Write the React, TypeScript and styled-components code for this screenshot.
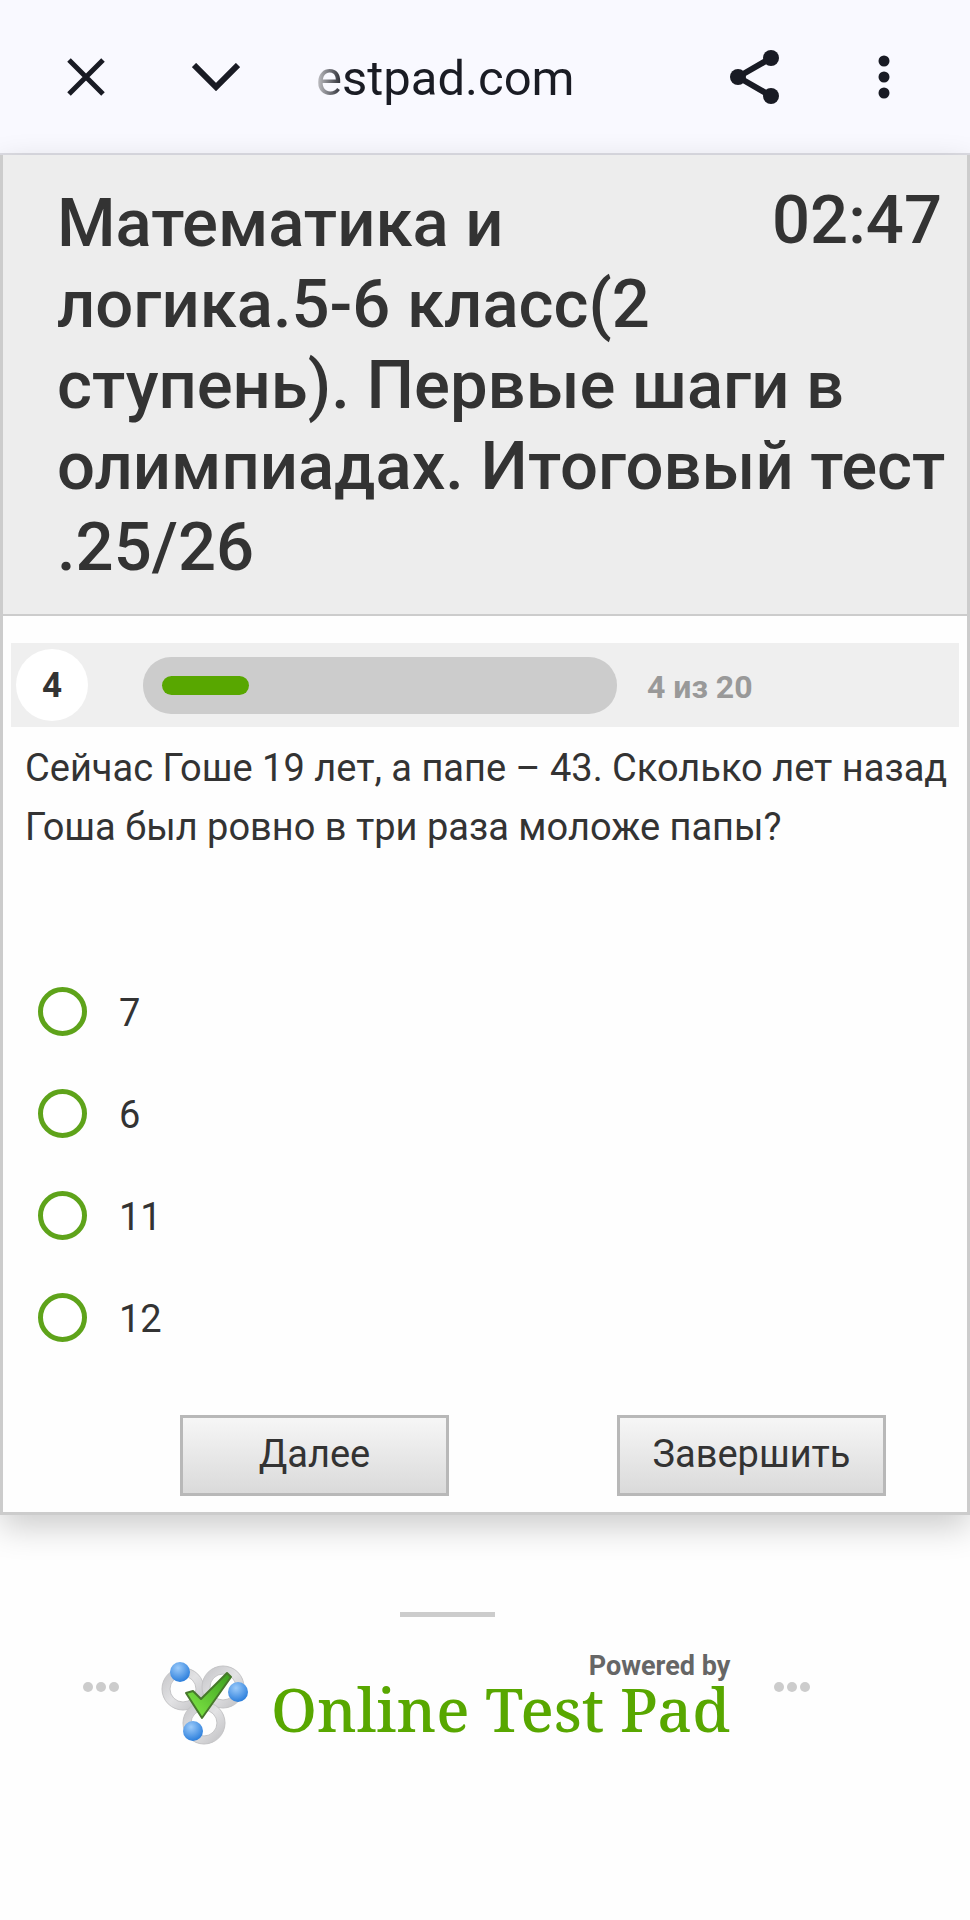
import React, { useState } from "react";
import styled, { createGlobalStyle } from "styled-components";

const GlobalStyle = createGlobalStyle`
  * { box-sizing: border-box; }
  body {
    margin: 0;
    background: #fefefe;
    color: #333;
    font-family: Roboto, "Liberation Sans", sans-serif;
  }
`;

const BrowserBar = styled.header`
  display: flex;
  align-items: center;
  height: 155px;
  padding: 0 56px;
  background: #f9f9ff;
  border-bottom: 2px solid #dddde4;
`;

const IconButton = styled.button<{ $gap?: number }>`
  display: flex;
  align-items: center;
  justify-content: center;
  width: 60px;
  height: 60px;
  padding: 0;
  margin-left: ${(p) => p.$gap ?? 0}px;
  border: 0;
  background: none;
  color: #191b24;
`;

const Address = styled.div`
  flex: 1;
  margin-left: 70px;
  padding-top: 4px;
  font-size: 49px;
  line-height: 60px;
  color: transparent;
  background: linear-gradient(90deg, #c8c8cc 0, #1a1c24 28px);
  background-clip: text;
`;

const Card = styled.main`
  border: 3px solid #ccc;
  border-top: 0;
  background: #fefefe;
  box-shadow: 0 12px 32px rgba(0, 0, 0, 0.2);
`;

const TestHeader = styled.div`
  padding: 28px 12px 26px 54px;
  background: #ededed;
  border-bottom: 2px solid #ccc;
`;

const Timer = styled.time`
  float: right;
  margin: 0 13px 0 64px;
  font-size: 67px;
  line-height: 74px;
  font-weight: 500;
`;

const Title = styled.h1`
  margin: 0;
  font-size: 67px;
  line-height: 81px;
  font-weight: 500;
`;

const ProgressRow = styled.div`
  display: flex;
  align-items: center;
  height: 84px;
  margin: 27px 8px 0;
  background: #efefef;
`;

const QuestionNumber = styled.span`
  display: flex;
  align-items: center;
  justify-content: center;
  width: 72px;
  height: 72px;
  margin-left: 5px;
  border-radius: 50%;
  background: #fff;
  font-size: 35px;
  font-weight: 700;
`;

const Track = styled.div`
  width: 50%;
  height: 57px;
  margin-left: 55px;
  padding: 19px;
  border-radius: 28px;
  background: #ccc;
`;

const Fill = styled.div`
  height: 19px;
  border-radius: 10px;
  background: #58a700;
`;

const ProgressText = styled.span`
  margin-left: 30px;
  padding-top: 4px;
  font-size: 32px;
  font-weight: 700;
  color: #999;
`;

const Question = styled.p`
  margin: 12px 16px 0 22px;
  font-size: 38px;
  line-height: 59px;
`;

const Answers = styled.fieldset`
  display: grid;
  gap: 42px;
  margin: 124px 0 0;
  padding: 0 35px;
  border: 0;
`;

const Answer = styled.label`
  display: flex;
  align-items: center;
  gap: 32px;
  height: 60px;
  font-size: 38px;
`;

const AnswerText = styled.span`
  padding-top: 4px;
`;

const Radio = styled.input`
  appearance: none;
  width: 49px;
  height: 49px;
  margin: 0;
  border: 5px solid #5ea31a;
  border-radius: 50%;
  background: #fff;
  &:checked { box-shadow: inset 0 0 0 10px #fff; background: #5ea31a; }
`;

const Actions = styled.div`
  display: flex;
  justify-content: space-between;
  padding: 68px 81px 16px 177px;
`;

const ActionButton = styled.button`
  width: 269px;
  height: 81px;
  padding: 0 0 4px;
  border: 3px solid #b8b8b8;
  background: linear-gradient(#f6f6f6, #dadada);
  color: #333;
  font-family: inherit;
  font-size: 38px;
`;

const Footer = styled.footer`
  display: flex;
  flex-direction: column;
  align-items: flex-start;
`;

const Divider = styled.hr`
  width: 95px;
  height: 5px;
  margin: 97px 0 0 400px;
  border: 0;
  background: #ccc;
`;

const BrandRow = styled.div`
  display: flex;
  align-items: center;
  margin: 33px 0 0 83px;
`;

const Brand = styled.a`
  display: flex;
  align-items: flex-start;
  margin: 0 44px 0 42px;
  color: #58a700;
  text-decoration: none;
`;

const BrandText = styled.span`
  display: flex;
  flex-direction: column;
  align-items: flex-end;
  margin-left: 20px;
`;

const Powered = styled.small`
  font-size: 27px;
  line-height: 32px;
  font-weight: 700;
  color: #666;
`;

const BrandName = styled.strong`
  font-family: "Noto Serif", "DejaVu Serif", serif;
  font-size: 61px;
  line-height: 54px;
  font-weight: 500;
  white-space: nowrap;
`;

const DotsIcon = styled.svg`
  margin-bottom: 22px;
`;

const LogoIcon = styled.svg`
  margin-top: 12px;
`;

const Dots = () => (
  <DotsIcon width="36" height="10" viewBox="0 0 36 10" fill="#ccc" aria-hidden="true">
    <circle cx="5" cy="5" r="5" />
    <circle cx="18" cy="5" r="5" />
    <circle cx="31" cy="5" r="5" />
  </DotsIcon>
);

const ring = "M0-21A21 21 0 1 1 0 21A21 21 0 1 1 0-21ZM0-13A13 13 0 1 0 0 13A13 13 0 1 0 0-13Z";

const Logo = () => (
  <LogoIcon width="90" height="84" viewBox="0 0 90 84" aria-hidden="true">
    <defs>
      <linearGradient id="metal" x1="0" y1="0" x2="1" y2="1">
        <stop offset="0" stopColor="#c2c2c5" />
        <stop offset="0.5" stopColor="#e2e2e4" />
        <stop offset="1" stopColor="#bdbdc0" />
      </linearGradient>
      <radialGradient id="ball" cx="0.4" cy="0.3" r="0.7">
        <stop offset="0" stopColor="#9ccbfa" />
        <stop offset="1" stopColor="#2c7fdc" />
      </radialGradient>
      <linearGradient id="tick" x1="1" y1="0" x2="0" y2="1">
        <stop offset="0" stopColor="#3a9c1e" />
        <stop offset="1" stopColor="#86ee48" />
      </linearGradient>
    </defs>
    <g fill="url(#metal)" stroke="#c4c4c6" strokeWidth="1">
      <path transform="translate(22 27)" d={ring} />
      <path transform="translate(62 25)" d={ring} />
      <path transform="translate(43 61)" d={ring} />
    </g>
    <circle cx="19" cy="10" r="10" fill="url(#ball)" />
    <circle cx="77" cy="30" r="10" fill="url(#ball)" />
    <circle cx="32" cy="69" r="10" fill="url(#ball)" />
    <path d="M25 31L32 29L40 37L66 11L70 15L41 56Z" fill="url(#tick)" stroke="#47782c" strokeWidth="2" strokeLinejoin="round" />
  </LogoIcon>
);

const answers = ["7", "6", "11", "12"];
const current = 4;
const total = 20;

export default function App() {
  const [picked, setPicked] = useState<string | null>(null);
  return (
    <>
      <GlobalStyle />
      <BrowserBar>
        <IconButton aria-label="Закрыть">
          <svg width="38" height="38" viewBox="0 0 38 38" fill="none" stroke="currentColor" strokeWidth="5">
            <path d="M2 2L36 36M36 2L2 36" />
          </svg>
        </IconButton>
        <IconButton $gap={70} aria-label="Свернуть">
          <svg width="48" height="28" viewBox="0 0 48 28" fill="none" stroke="currentColor" strokeWidth="6">
            <path d="M2 2L24 24L46 2" />
          </svg>
        </IconButton>
        <Address>estpad.com</Address>
        <IconButton aria-label="Поделиться">
          <svg width="50" height="54" viewBox="0 0 50 54" fill="currentColor">
            <path d="M9 27L42 8M9 27L42 46" stroke="currentColor" strokeWidth="6" />
            <circle cx="42" cy="8" r="8" />
            <circle cx="9" cy="27" r="8" />
            <circle cx="42" cy="46" r="8" />
          </svg>
        </IconButton>
        <IconButton $gap={70} aria-label="Меню">
          <svg width="12" height="44" viewBox="0 0 12 44" fill="currentColor">
            <circle cx="6" cy="6" r="5.5" />
            <circle cx="6" cy="22" r="5.5" />
            <circle cx="6" cy="38" r="5.5" />
          </svg>
        </IconButton>
      </BrowserBar>
      <Card>
        <TestHeader>
          <Timer>02:47</Timer>
          <Title>Математика и логика.5-6 класс(2 ступень). Первые шаги в олимпиадах. Итоговый тест .25/26</Title>
        </TestHeader>
        <ProgressRow>
          <QuestionNumber>{current}</QuestionNumber>
          <Track role="progressbar" aria-label="Прогресс" aria-valuenow={current} aria-valuemax={total}>
            <Fill style={{ width: `${(current / total) * 100}%` }} />
          </Track>
          <ProgressText>{current} из {total}</ProgressText>
        </ProgressRow>
        <Question>Сейчас Гоше 19 лет, а папе – 43. Сколько лет назад Гоша был ровно в три раза моложе папы?</Question>
        <Answers>
          {answers.map((a) => (
            <Answer key={a}>
              <Radio type="radio" name="answer" value={a} checked={picked === a} onChange={() => setPicked(a)} />
              <AnswerText>{a}</AnswerText>
            </Answer>
          ))}
        </Answers>
        <Actions>
          <ActionButton type="button">Далее</ActionButton>
          <ActionButton type="button">Завершить</ActionButton>
        </Actions>
      </Card>
      <Footer>
        <Divider />
        <BrandRow>
          <Dots />
          <Brand href="#">
            <Logo />
            <BrandText>
              <Powered>Powered by</Powered>
              <BrandName>Online Test Pad</BrandName>
            </BrandText>
          </Brand>
          <Dots />
        </BrandRow>
      </Footer>
    </>
  );
}
